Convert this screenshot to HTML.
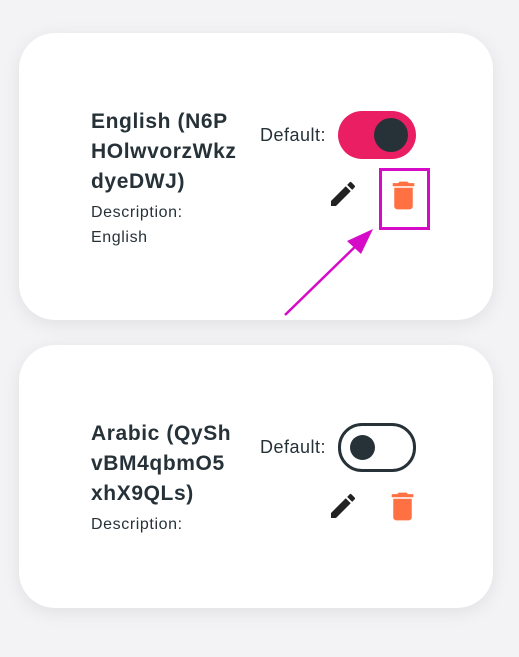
<!DOCTYPE html>
<html><head><meta charset="utf-8"><style>
body{margin:0;width:519px;height:657px;background:#f3f3f5;font-family:"Liberation Sans",sans-serif;position:relative;overflow:hidden;color:#263238}
.card{position:absolute;left:19px;width:474px;background:#fff;border-radius:36px;box-shadow:0 4px 18px rgba(0,0,0,0.08)}
.t{position:absolute;left:91px;font-weight:bold;font-size:21px;letter-spacing:0.6px;line-height:30px;color:#263238}
.d{position:absolute;left:91px;font-size:16px;letter-spacing:0.6px;line-height:25px;color:#263238}
.lbl{position:absolute;left:260px;font-size:18px;letter-spacing:0.5px;color:#263238}
.tg{position:absolute;left:338px;width:78px;height:48px;border-radius:24px;box-sizing:border-box}
.k{position:absolute;border-radius:50%;background:#263238}
svg{position:absolute}
</style></head><body>
<div class="card" style="top:33px;height:287px"></div>
<div class="card" style="top:345px;height:263px"></div>

<div class="t" style="top:107px">English (N6P<br>HOlwvorzWkz<br>dyeDWJ)</div>
<div class="d" style="top:200px">Description:<br>English</div>
<div class="lbl" style="top:125px">Default:</div>
<div class="tg" style="top:111px;background:#e91e63"><div class="k" style="left:36px;top:7px;width:34px;height:34px"></div></div>
<svg style="left:327px;top:178px" width="32" height="32" viewBox="0 0 24 24"><path fill="#222" d="M3 17.25V21h3.75L17.81 9.94l-3.75-3.75L3 17.25zM20.71 7.04a1 1 0 0 0 0-1.41l-2.34-2.34a1 1 0 0 0-1.41 0l-1.83 1.83 3.75 3.75 1.83-1.83z"/></svg>
<svg style="left:385px;top:177px" width="37" height="37" viewBox="0 0 24 24"><path fill="#ff7043" d="M6 19c0 1.1.9 2 2 2h8c1.1 0 2-.9 2-2V7H6v12zM19 4h-3.5l-1-1h-5l-1 1H5v2h14V4z"/></svg>
<div style="position:absolute;left:379px;top:168px;width:45px;height:56px;border:3px solid #d60bc8"></div>
<svg style="left:0;top:0" width="519" height="657"><line x1="285" y1="315" x2="362" y2="240" stroke="#d60bc8" stroke-width="2.5"/><polygon points="373,229 347,241 361,254" fill="#d60bc8"/></svg>

<div class="t" style="top:419px">Arabic (QySh<br>vBM4qbmO5<br>xhX9QLs)</div>
<div class="d" style="top:512px">Description:</div>
<div class="lbl" style="top:437px">Default:</div>
<div class="tg" style="top:423px;border:3px solid #263238;height:49px"><div class="k" style="left:9px;top:9px;width:25px;height:25px"></div></div>
<svg style="left:327px;top:490px" width="32" height="32" viewBox="0 0 24 24"><path fill="#222" d="M3 17.25V21h3.75L17.81 9.94l-3.75-3.75L3 17.25zM20.71 7.04a1 1 0 0 0 0-1.41l-2.34-2.34a1 1 0 0 0-1.41 0l-1.83 1.83 3.75 3.75 1.83-1.83z"/></svg>
<svg style="left:384px;top:488px" width="37" height="37" viewBox="0 0 24 24"><path fill="#ff7043" d="M6 19c0 1.1.9 2 2 2h8c1.1 0 2-.9 2-2V7H6v12zM19 4h-3.5l-1-1h-5l-1 1H5v2h14V4z"/></svg>
</body></html>
